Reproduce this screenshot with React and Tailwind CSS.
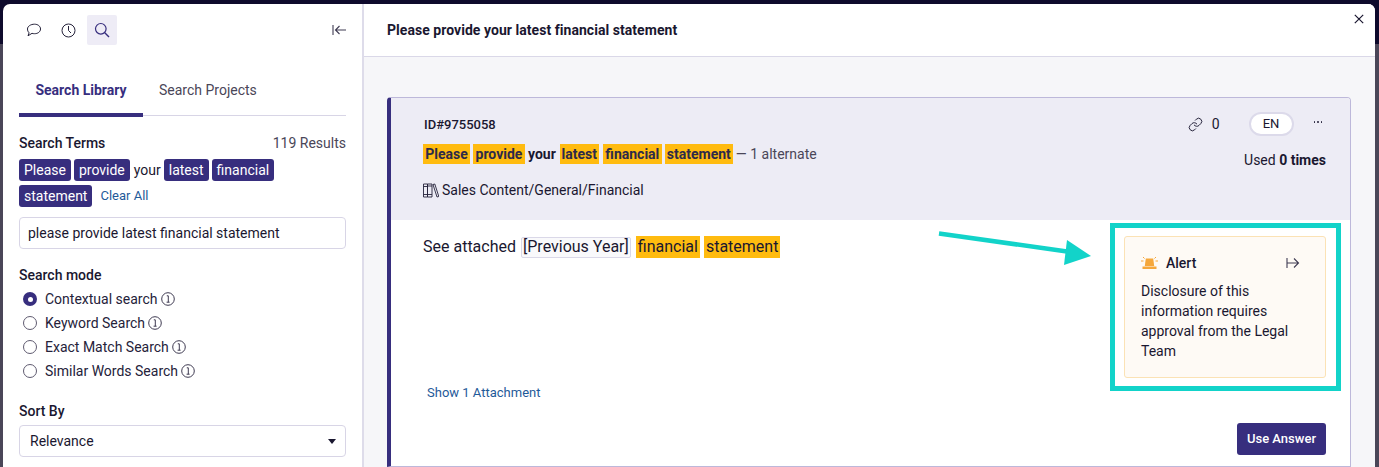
import React from "react";

const font = { fontFamily: "Roboto, sans-serif" };

function Chip({ children }) {
  return <span className="inline-flex h-[22px] items-center rounded-[3px] bg-[#372e7e] px-[5px] text-[14px] text-white">{children}</span>;
}

function Mark({ children, className = "" }) {
  return <span className={`inline-flex items-center bg-[#ffbb0f] px-[2px] ${className}`}>{children}</span>;
}

function InfoIcon() {
  return (
    <svg width="14" height="14" viewBox="0 0 14 14" fill="none" stroke="#3f3b52" strokeWidth="1" className="ml-[3px] shrink-0">
      <circle cx="7" cy="7" r="6.300" />
      <path d="M5.800 3.800h1.500v6.400M5.600 10.200h3" strokeWidth="1" />
    </svg>
  );
}

function Radio({ label, checked }) {
  return (
    <div className="flex h-[24px] items-center pl-[4px]">
      {checked ? (
        <span className="flex h-[14px] w-[14px] items-center justify-center rounded-full bg-[#372e7e]">
          <span className="h-[5px] w-[5px] rounded-full bg-white" />
        </span>
      ) : (
        <span className="h-[14px] w-[14px] rounded-full border border-[#5f5b70] bg-white" />
      )}
      <span className="ml-[8px] text-[14px] text-[#25223a]">{label}</span>
      <InfoIcon />
    </div>
  );
}

export default function App() {
  return (
    <div style={font} className="relative flex h-[467px] w-[1379px] overflow-hidden bg-[linear-gradient(#0e0a2c_44px,#4a4658_44px)] pl-[3px] pr-[4px] pt-[4px] text-[#1a1730]">
      <div className="flex min-w-0 flex-1 overflow-hidden rounded-t-[7px] bg-white">
        {/* left panel */}
        <aside className="w-[361px] shrink-0 border-r-2 border-[#dedcea] pl-[16px] pr-[16px]">
          <div className="flex h-[41px] items-end justify-between">
            <div className="flex h-[30px] items-center">
              <span className="flex h-[30px] w-[30px] items-center justify-center">
                <svg width="16" height="15" viewBox="0 0 16 15" fill="none" stroke="#25223a" strokeWidth="1">
                  <path d="M8.500 1.200c3.400 0 6 2 6 4.800s-2.600 4.700-6 4.700c-.9 0-1.700-.1-2.500-.4L2 12.800l1.100-3C2 8.800 1.500 7.500 1.500 6c0-2.800 3.300-4.800 7-4.800z" />
                </svg>
              </span>
              <span className="ml-[4px] flex h-[30px] w-[30px] items-center justify-center">
                <svg width="15" height="15" viewBox="0 0 15 15" fill="none" stroke="#25223a" strokeWidth="1">
                  <circle cx="7.500" cy="7.500" r="6.500" />
                  <path d="M7.500 3v4.500l2.500 2.500" />
                </svg>
              </span>
              <span className="ml-[4px] flex h-[30px] w-[30px] items-center justify-center rounded-[2px] bg-[#eeecf6]">
                <svg width="16" height="16" viewBox="0 0 16 16" fill="none" stroke="#372e7e" strokeWidth="1.200">
                  <circle cx="6.800" cy="6.800" r="5.300" />
                  <path d="M10.800 10.800l4.200 4.200" strokeWidth="1.400" />
                </svg>
              </span>
            </div>
            <svg width="14" height="12" viewBox="0 0 14 12" fill="none" stroke="#3f3b52" strokeWidth="1.100" className="mb-[9px]">
              <path d="M1 1v10M14 6H3.500M7.500 2L3.500 6l4 4" />
            </svg>
          </div>

          <div className="mt-[26px] flex h-[45px] border-b border-[#d8d5e6]">
            <div className="flex h-[46px] w-[124px] items-start justify-center rounded-t-[4px] border-b-4 border-[#372e7e] pt-[11px] text-[14px] font-bold leading-[16px] text-[#372e7e]">
              Search Library
            </div>
            <div className="ml-[16px] pt-[11px] text-[14px] leading-[16px] text-[#4a4658]">Search Projects</div>
          </div>

          <div className="mt-[19px] flex h-[16px] items-center justify-between text-[14px] leading-[16px]">
            <span className="font-medium">Search Terms</span>
            <span className="text-[#4a4658]">119 Results</span>
          </div>
          <div className="mt-[8px] flex flex-wrap items-center gap-x-[3px] gap-y-[4px]">
            <Chip>Please</Chip>
            <Chip>provide</Chip>
            <span className="ml-[1px] text-[14px]">your</span>
            <Chip>latest</Chip>
            <Chip>financial</Chip>
            <Chip>statement</Chip>
            <span className="ml-[5px] text-[13px] text-[#1f5a99]">Clear All</span>
          </div>
          <div className="mt-[10px] flex h-[32px] items-center rounded-[4px] border border-[#d8d5e6] pl-[8px] text-[14px]">
            please provide latest financial statement
          </div>

          <div className="mt-[18px] text-[14px] font-medium leading-[16px]">Search mode</div>
          <div className="mt-[4px]">
            <Radio label="Contextual search" checked />
            <Radio label="Keyword Search" />
            <Radio label="Exact Match Search" />
            <Radio label="Similar Words Search" />
          </div>

          <div className="mt-[20px] text-[14px] font-medium leading-[16px]">Sort By</div>
          <div className="mt-[6px] flex h-[32px] items-center justify-between rounded-[4px] border border-[#d8d5e6] pl-[10px] pr-[9px] text-[14px]">
            <span>Relevance</span>
            <span className="h-0 w-0 border-x-[4.500px] border-t-[5px] border-x-transparent border-t-[#1a1730]" />
          </div>
        </aside>

        {/* right panel */}
        <main className="relative flex min-w-0 flex-1 flex-col bg-[#f6f6f9]">
          <header className="relative flex h-[53px] shrink-0 items-center border-b border-[#dad8e8] bg-white pl-[23px] text-[14px] font-bold tracking-[0.045px]">
            Please provide your latest financial statement
            <svg width="10" height="10" viewBox="0 0 10 10" fill="none" stroke="#1a1730" strokeWidth="1.200" className="absolute right-[11px] top-[10px]">
              <path d="M.8.8l8.400 8.400M9.200.8L.8 9.200" />
            </svg>
          </header>

          <div className="ml-[23px] mr-[24px] mt-[40px] flex-1 overflow-hidden rounded-t-[4px] border border-l-4 border-[#bdb8da] border-l-[#372e7e] bg-white">
            <div className="flex h-[122px] justify-between bg-[#edecf5] pl-[32px] pr-[24px]">
              <div>
                <div className="mt-[19px] pl-[1px] text-[13px] font-medium leading-[15px]">ID#9755058</div>
                <div className="mt-[12px] flex h-[20px] items-center text-[14px] font-bold text-[#2d2a4a]">
                  <Mark className="h-[20px] w-[47px] justify-center">Please</Mark>
                  <Mark className="ml-[3px] h-[20px] w-[52px] justify-center">provide</Mark>
                  <span className="ml-[3px] text-[#1a1730]">your</span>
                  <Mark className="ml-[4px] h-[20px] w-[39px] justify-center">latest</Mark>
                  <Mark className="ml-[4px] h-[20px] w-[59px] justify-center">financial</Mark>
                  <Mark className="ml-[3px] h-[20px] w-[68px] justify-center">statement</Mark>
                  <span className="ml-[3px] text-[14px] font-normal text-[#4a4658]">— 1 alternate</span>
                </div>
                <div className="mt-[16px] flex h-[20px] items-center text-[14px]">
                  <svg width="16" height="15" viewBox="0 0 16 15" fill="none" stroke="#25223a" strokeWidth="0.900">
                    <path d="M.5 1h4v13h-4zM4.500 1h4.500v13H4.500zM.5 3.500h4M.5 11.500h4M4.500 3h4.500M4.500 11.500h4.500M10 1.500l4 12.500M11.800 1l4 12.500M10 1.500l1.800-.5M14 14l1.800-.5" />
                  </svg>
                  <span className="ml-[3px]">Sales Content/General/Financial</span>
                </div>
              </div>
              <div className="flex flex-col items-end">
                <div className="mt-[14px] flex h-[24px] items-center">
                  <svg width="15" height="15" viewBox="0 0 24 24" fill="none" stroke="#25223a" strokeWidth="1.600" strokeLinecap="round" strokeLinejoin="round">
                    <path d="M10 13a5 5 0 0 0 7.540.54l3-3a5 5 0 0 0-7.070-7.070l-1.720 1.710" />
                    <path d="M14 11a5 5 0 0 0-7.540-.54l-3 3a5 5 0 0 0 7.070 7.070l1.710-1.710" />
                  </svg>
                  <span className="ml-[9px] text-[14px]">0</span>
                  <span className="ml-[29px] flex h-[24px] w-[45px] items-center justify-center rounded-full border-2 border-[#dcdaea] bg-white text-[13px]">EN</span>
                  <span className="mb-[4px] ml-[20px] mr-[4px] flex gap-[2px]">
                    <span className="h-[1.500px] w-[1.500px] rounded-full bg-[#25223a]" />
                    <span className="h-[1.500px] w-[1.500px] rounded-full bg-[#25223a]" />
                    <span className="h-[1.500px] w-[1.500px] rounded-full bg-[#25223a]" />
                  </span>
                </div>
                <div className="mt-[16px] text-[14px] leading-[16px]">
                  Used <span className="font-bold">0 times</span>
                </div>
              </div>
            </div>

            <div className="flex justify-between pl-[32px] pr-[24px]">
              <div className="flex flex-col">
                <div className="mt-[16px] flex h-[22px] items-center text-[16px]">
                  <span>See attached</span>
                  <span className="ml-[5px] flex h-[21px] items-center rounded-[2px] border border-[#dad8e8] bg-[#f9f9fb] px-[1px]">[Previous Year]</span>
                  <Mark className="ml-[5px] h-[22px]">financial</Mark>
                  <Mark className="ml-[4px] h-[22px]">statement</Mark>
                </div>
                <div className="ml-[4px] mt-[127px] text-[13px] leading-[16px] text-[#1f5a99]">Show 1 Attachment</div>
              </div>
              <div className="flex flex-col items-end">
                <div className="mt-[16px] h-[142px] w-[202px] rounded-[3px] border border-[#fbe2b5] bg-[#fefaf5] px-[16px]">
                  <div className="mt-[16px] flex h-[20px] items-center justify-between pr-[9px]">
                    <div className="flex items-center">
                      <svg width="17" height="14" viewBox="0 0 17 14" fill="#f5a73b" className="mr-[8px]">
                        <path d="M4.800 2.500h7.400l1 7.500H3.800z" />
                        <path d="M1.500 10.500h14V13h-14z" />
                        <path d="M0 5h2.500M14.500 5H17M2 1l1.500 1.500M15 1l-1.500 1.500" stroke="#f5a73b" strokeWidth="1" />
                      </svg>
                      <span className="text-[14px] font-medium">Alert</span>
                    </div>
                    <svg width="14" height="12" viewBox="0 0 14 12" fill="none" stroke="#3f3b52" strokeWidth="1.100">
                      <path d="M1 1v10M1 6H12.500M8 1.500l4.500 4.500L8 10.500" />
                    </svg>
                  </div>
                  <p className="mt-[8px] text-[14px] leading-[20px]">
                    Disclosure of this information requires approval from the Legal Team
                  </p>
                </div>
                <button className="mt-[45px] flex h-[32px] w-[89px] items-center justify-center rounded-[3px] bg-[#372e7e] text-[13px] font-medium text-white">
                  Use Answer
                </button>
              </div>
            </div>
          </div>
        </main>
      </div>

      {/* annotation overlay */}
      <div className="absolute left-[1110px] top-[223px] h-[168px] w-[231px] border-[5px] border-[#12d3c9]" />
      <svg width="160" height="44" viewBox="0 0 160 44" className="absolute left-[938px] top-[228px]">
        <path d="M1 5.500l128 18" stroke="#12d3c9" strokeWidth="4.500" fill="none" />
        <path d="M129 12l24 16-27 9z" fill="#12d3c9" />
      </svg>
    </div>
  );
}
